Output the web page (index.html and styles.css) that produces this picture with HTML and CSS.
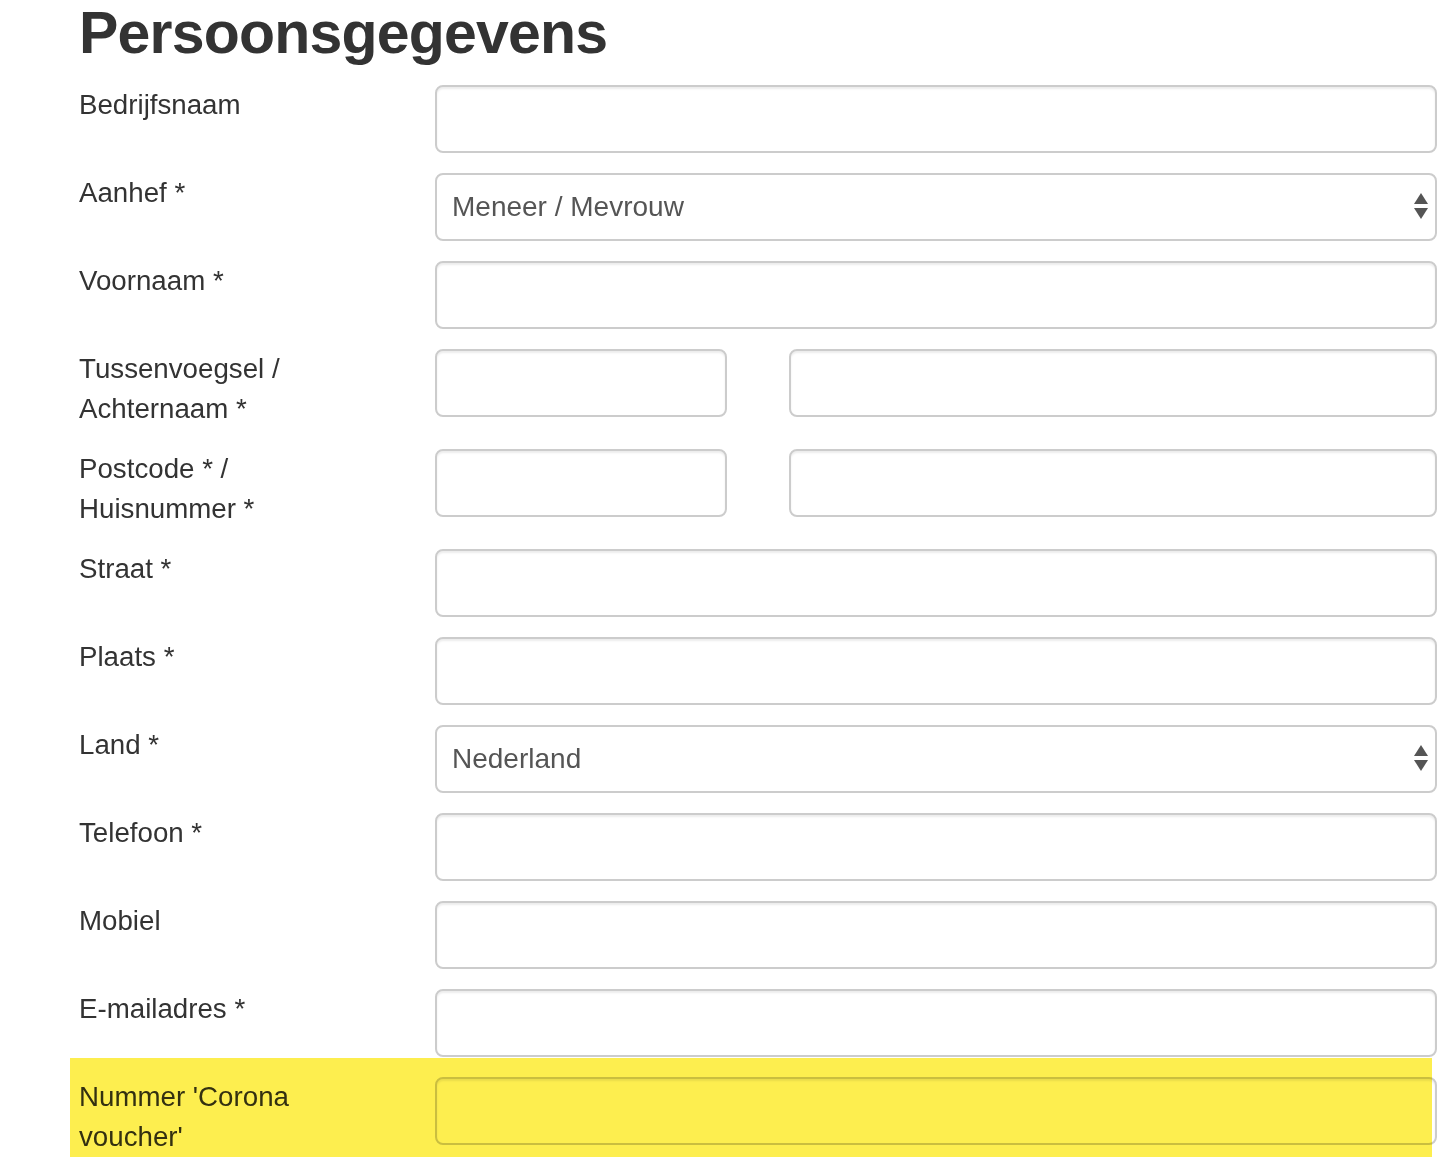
FILE: index.html
```html
<!DOCTYPE html>
<html lang="nl">
<head>
  <meta charset="UTF-8">
  <title>Persoonsgegevens</title>
  <link rel="stylesheet" href="styles.css">
</head>
<body>
  <div class="page">
    <h2 class="title">Persoonsgegevens</h2>

    <form class="form">
      <div class="row">
        <label class="lab">Bedrijfsnaam</label>
        <input type="text" class="field">
      </div>

      <div class="row">
        <label class="lab">Aanhef *</label>
        <div class="sel">
          <select class="field select">
            <option>Meneer / Mevrouw</option>
          </select>
        </div>
      </div>

      <div class="row">
        <label class="lab">Voornaam *</label>
        <input type="text" class="field">
      </div>

      <div class="row">
        <label class="lab">Tussenvoegsel /<br>Achternaam *</label>
        <div class="split">
          <input type="text" class="field">
          <input type="text" class="field">
        </div>
      </div>

      <div class="row">
        <label class="lab">Postcode * /<br>Huisnummer *</label>
        <div class="split">
          <input type="text" class="field">
          <input type="text" class="field">
        </div>
      </div>

      <div class="row">
        <label class="lab">Straat *</label>
        <input type="text" class="field">
      </div>

      <div class="row">
        <label class="lab">Plaats *</label>
        <input type="text" class="field">
      </div>

      <div class="row">
        <label class="lab">Land *</label>
        <div class="sel">
          <select class="field select">
            <option>Nederland</option>
          </select>
        </div>
      </div>

      <div class="row">
        <label class="lab">Telefoon *</label>
        <input type="text" class="field">
      </div>

      <div class="row">
        <label class="lab">Mobiel</label>
        <input type="text" class="field">
      </div>

      <div class="row">
        <label class="lab">E-mailadres *</label>
        <input type="text" class="field">
      </div>

      <div class="row marked">
        <label class="lab">Nummer 'Corona<br>voucher'</label>
        <input type="text" class="field">
        <div class="highlight"></div>
      </div>
    </form>
  </div>
</body>
</html>
```

FILE: styles.css
```css
* {
  margin: 0;
  padding: 0;
  box-sizing: border-box;
}

body {
  background: #fff;
  color: #333;
  font-family: "Liberation Sans", Arial, Helvetica, sans-serif;
}

.page {
  padding: 1px 0 0 78px;
  width: 1437px;
}

.title {
  font-size: 59px;
  font-weight: bold;
  line-height: 1.1;
  letter-spacing: -0.8px;
  color: #333;
  margin-bottom: 19px;
  padding-left: 1px;
}

.row {
  display: grid;
  grid-template-columns: 357px 1002px;
  align-items: start;
  margin-bottom: 20px;
}

.lab {
  font-size: 27.7px;
  line-height: 40px;
  color: #333;
  padding-left: 1px;
}

.field {
  display: block;
  width: 100%;
  height: 68px;
  border: 2px solid #ccc;
  border-radius: 8px;
  background: #fff;
  box-shadow: inset 0 2px 2px rgba(0, 0, 0, 0.075);
  padding: 0 24px;
  font-family: inherit;
  font-size: 28px;
  color: #555;
  outline: none;
}

.sel {
  position: relative;
}

.select {
  -webkit-appearance: none;
  appearance: none;
  padding-left: 15px;
  box-shadow: none;
}

/* double arrow of the select */
.sel::before,
.sel::after {
  content: "";
  position: absolute;
  right: 9px;
  width: 0;
  height: 0;
  border-left: 7px solid transparent;
  border-right: 7px solid transparent;
  pointer-events: none;
}

.sel::before {
  top: 20px;
  border-bottom: 11px solid #555;
}

.sel::after {
  top: 35px;
  border-top: 11px solid #555;
}

.split {
  display: grid;
  grid-template-columns: 292px 648px;
  column-gap: 62px;
}

.marked {
  position: relative;
}

.highlight {
  position: absolute;
  left: -8px;
  top: -19px;
  width: 1362px;
  height: 99px;
  background: #fdee4f;
  mix-blend-mode: multiply;
  pointer-events: none;
}
```
